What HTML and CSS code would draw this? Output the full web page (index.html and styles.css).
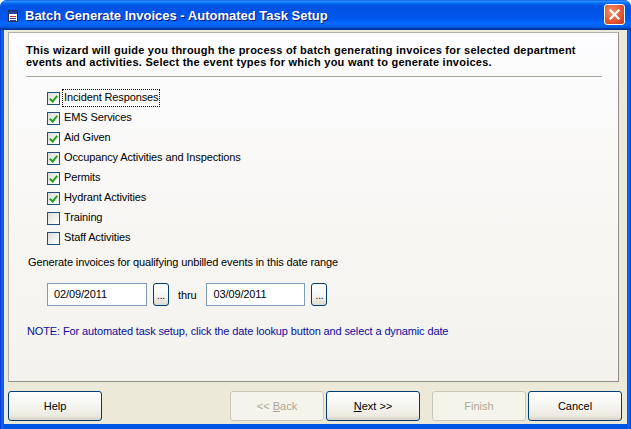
FILE: index.html
```html
<!DOCTYPE html>
<html>
<head>
<meta charset="utf-8">
<link rel="stylesheet" href="styles.css">
</head>
<body>
<div class="window">
  <div class="titlebar">
    <svg class="appicon" width="10" height="12" viewBox="0 0 10 12">
      <rect x="0.5" y="0.5" width="9" height="11" fill="#ffffff" stroke="#1a2a6a"/>
      <rect x="1" y="1" width="8" height="3" fill="#2b3f9a"/>
      <rect x="2" y="6" width="6" height="1" fill="#c03030"/>
      <rect x="2" y="8" width="6" height="1" fill="#2b3f9a"/>
      <rect x="2" y="10" width="6" height="1" fill="#2b3f9a"/>
    </svg>
    <span class="title">Batch Generate Invoices - Automated Task Setup</span>
    <div class="close">
      <svg width="13" height="13" viewBox="0 0 13 13">
        <path d="M2.5 2.5 L10.5 10.5 M10.5 2.5 L2.5 10.5" stroke="#ffffff" stroke-width="2.2" stroke-linecap="square"/>
      </svg>
    </div>
  </div>
  <div class="client">
    <div class="panel">
      <p class="intro">This wizard will guide you through the process of batch generating invoices for selected department events and activities. Select the event types for which you want to generate invoices.</p>
      <div class="sep"></div>
      <ul class="checks">
        <li><span class="box on"></span><span class="lbl focus">Incident Responses</span></li>
        <li><span class="box on"></span><span class="lbl">EMS Services</span></li>
        <li><span class="box on"></span><span class="lbl">Aid Given</span></li>
        <li><span class="box on"></span><span class="lbl">Occupancy Activities and Inspections</span></li>
        <li><span class="box on"></span><span class="lbl">Permits</span></li>
        <li><span class="box on"></span><span class="lbl">Hydrant Activities</span></li>
        <li><span class="box"></span><span class="lbl">Training</span></li>
        <li><span class="box"></span><span class="lbl">Staff Activities</span></li>
      </ul>
      <p class="range">Generate invoices for qualifying unbilled events in this date range</p>
      <div class="dates">
        <div class="field">02/09/2011</div>
        <div class="dots">...</div>
        <span class="thru">thru</span>
        <div class="field second">03/09/2011</div>
        <div class="dots">...</div>
      </div>
      <p class="note">NOTE: For automated task setup, click the date lookup button and select a dynamic date</p>
    </div>
    <div class="buttons">
      <div class="btn"><span>Help</span></div>
      <div class="btn disabled back"><span>&lt;&lt; <u>B</u>ack</span></div>
      <div class="btn next"><span><u>N</u>ext &gt;&gt;</span></div>
      <div class="btn disabled finish"><span>Finish</span></div>
      <div class="btn cancel"><span>Cancel</span></div>
    </div>
  </div>
</div>
</body>
</html>
```
FILE: styles.css
```css
html, body {
  margin: 0;
  padding: 0;
}
body {
  width: 631px;
  height: 429px;
  overflow: hidden;
  background: #ffffff;
  font-family: "Liberation Sans", Arial, sans-serif;
  font-size: 11px;
  color: #000;
}
.window {
  width: 631px;
  height: 429px;
  display: flex;
  flex-direction: column;
  background: linear-gradient(to right, #0831d9 0, #166aee 2px, #0055e5 4px, #0055e5 627px, #166aee 629px, #0831d9 631px);
  border-radius: 7px 7px 0 0;
  overflow: hidden;
}
.titlebar {
  height: 30px;
  flex: none;
  display: flex;
  align-items: center;
  padding-left: 8px;
  background: linear-gradient(to bottom, #0058ee 0%, #3593ff 4%, #288eff 6%, #127dff 8%, #036ffc 10%, #0262ee 14%, #0057e5 20%, #0054e3 24%, #0055eb 56%, #005bf5 66%, #026afe 76%, #0062ef 86%, #0052d6 92%, #0040ab 94%, #003092 100%);
  position: relative;
}
.appicon {
  margin-top: 1px;
  flex: none;
}
.title {
  margin-left: 7px;
  color: #ffffff;
  font-weight: bold;
  font-size: 13px;
  text-shadow: 1px 1px 0 #0a1883;
}
.close {
  position: absolute;
  left: 604px;
  top: 4px;
  width: 19px;
  height: 19px;
  border: 1px solid #ffffff;
  border-radius: 3px;
  background: radial-gradient(circle at 35% 35%, #f0926f 0%, #e35a33 55%, #c2381a 100%);
  display: flex;
  align-items: center;
  justify-content: center;
}
.client {
  flex: 1;
  margin: 0 4px 5px 4px;
  background: #ece9d8;
  display: flex;
  flex-direction: column;
  padding: 2px 5px 0 4px;
}
.panel {
  height: 348px;
  width: 609px;
  border: 1px solid #8f8f8f;
  border-top-color: #b0b0a8;
  border-left-color: #b0b0a8;
  background: linear-gradient(to bottom, #fdfdff 0%, #f9f8f6 40%, #f4f2ed 100%);
  letter-spacing: -0.12px;
}
.intro {
  margin: 11px 16px 0 17px;
  font-weight: bold;
  font-size: 11px;
  line-height: 12px;
  letter-spacing: 0.25px;
}
.sep {
  margin: 8px 16px 0 17px;
  height: 1px;
  background: #a7a59c;
}
.checks {
  list-style: none;
  margin: 11px 0 0 38px;
  padding: 0;
}
.checks li {
  height: 20px;
  display: flex;
  align-items: center;
}
.box {
  width: 11px;
  height: 11px;
  border: 1px solid #1c5180;
  background: linear-gradient(135deg, #dcdcd7 0%, #f0f0ea 50%, #ffffff 100%);
  flex: none;
  position: relative;
}
.box.on::after {
  content: "";
  position: absolute;
  left: 2px;
  top: 1px;
  width: 3px;
  height: 6px;
  border: solid #21a121;
  border-width: 0 2px 2px 0;
  transform: translate(1px, 0) rotate(40deg);
}
.lbl {
  margin-left: 2px;
  padding: 1px 1px 2px 1px;
  border: 1px dotted transparent;
  line-height: 13px;
}
.lbl.focus {
  border-color: #000;
}
.range {
  margin: 8px 0 0 19px;
  line-height: 13px;
}
.dates {
  display: flex;
  align-items: center;
  margin: 14px 0 0 38px;
}
.field {
  width: 92px;
  height: 21px;
  border: 1px solid #7f9db9;
  background: #ffffff;
  padding-left: 6px;
  line-height: 21px;
}
.field.second {
  width: 91px;
}
.dots {
  width: 14px;
  height: 21px;
  margin-left: 6px;
  border: 1px solid #003c74;
  border-radius: 3px;
  background: linear-gradient(to bottom, #ffffff 0%, #f4f4f0 60%, #dcd9cd 100%);
  text-align: center;
  line-height: 24px;
  font-size: 10px;
}
.thru {
  margin: 0 10px 0 9px;
}
.note {
  margin: 19px 0 0 18px;
  color: #0c0ca0;
  line-height: 13px;
}
.buttons {
  display: flex;
  margin-top: 9px;
}
.btn {
  width: 92px;
  height: 28px;
  border: 1px solid #003c74;
  border-radius: 3px;
  background: linear-gradient(to bottom, #ffffff 0%, #f5f5f1 50%, #ece9df 85%, #d6d0c5 100%);
  display: flex;
  align-items: center;
  justify-content: center;
  font-size: 11px;
}
.btn.disabled {
  border-color: #c9c7ba;
  background: #f5f4ea;
  color: #aca899;
}
.back {
  margin-left: auto;
}
.next {
  margin-left: 2px;
}
.finish {
  margin-left: 12px;
}
.cancel {
  margin-left: 2px;
}
```
